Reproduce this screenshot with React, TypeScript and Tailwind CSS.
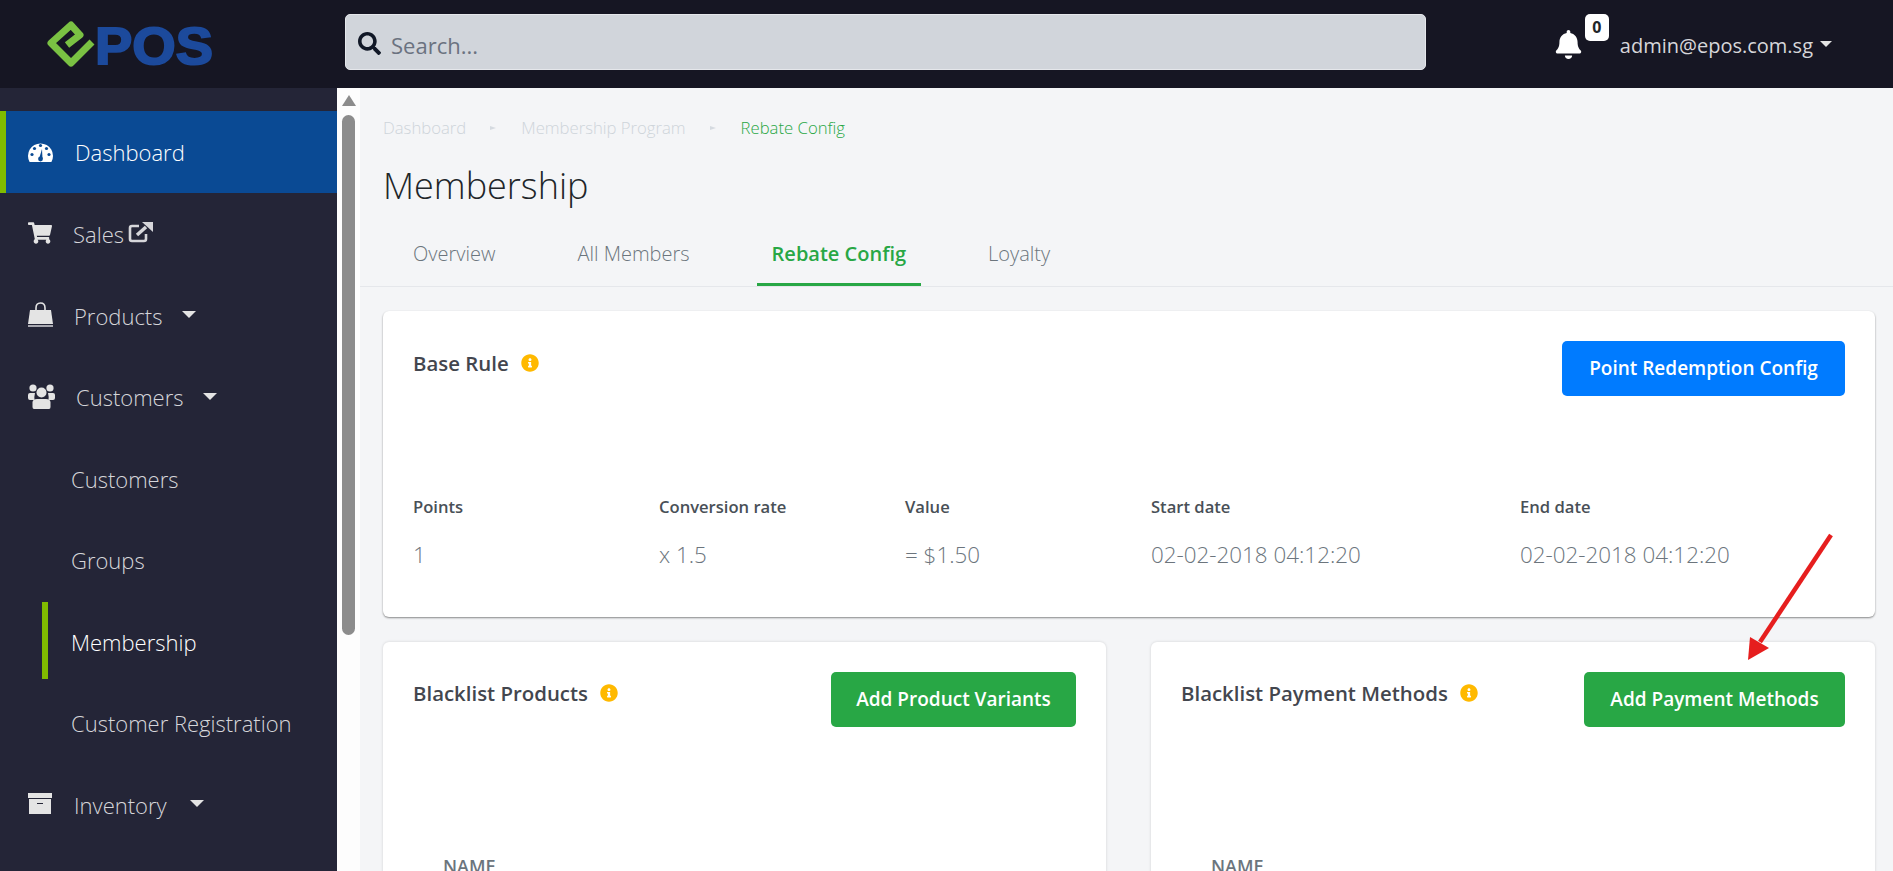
import React from "react";
import { FaShoppingCart, FaBell, FaSearch, FaInfoCircle } from "react-icons/fa";

const font = { fontFamily: '"Open Sans", "Noto Sans", sans-serif' };

function Logo() {
  return (
    <svg width="190" height="72" viewBox="44 8 190 72" className="block">
      <path d="M67 45 L80 35 L71 25 L51 43 L71 63 L92 42" fill="none" stroke="#7ac143" strokeWidth="7" strokeLinejoin="round" />
      <text x="95" y="64" textLength="118" lengthAdjust="spacingAndGlyphs" fontFamily="Liberation Sans" fontWeight="700" fontSize="52" fill="#1c4a9c" stroke="#1c4a9c" strokeWidth="2">POS</text>
    </svg>
  );
}

function Caret({ className }: { className?: string }) {
  return <span className={"inline-block w-0 h-0 border-l-[7px] border-r-[7px] border-t-[7px] border-l-transparent border-r-transparent border-t-[#e4e4e4] " + (className || "")} />;
}

function Ext() {
  return (
    <svg width="25" height="21" viewBox="0 0 25 21" fill="none" className="ml-[4px] -mt-[2px]">
      <path d="M11 4 H4 Q2 4 2 6 V17 Q2 19 4 19 H16 Q18 19 18 17 V12" stroke="#d6d6da" strokeWidth="2.6" />
      <path d="M9 13 L18 5" stroke="#d6d6da" strokeWidth="3.4" />
      <path d="M14 0 H25 V10 Z" fill="#d6d6da" />
    </svg>
  );
}

function Gauge() {
  return (
    <svg width="25" height="20" viewBox="0 0 25 20">
      <path d="M1.6 20 A12.5 12.5 0 1 1 23.4 20 Z" fill="#fff" />
      <circle cx="4" cy="12.5" r="1.6" fill="#0a4a94" />
      <circle cx="6.5" cy="6.5" r="1.6" fill="#0a4a94" />
      <circle cx="12.5" cy="3.5" r="1.6" fill="#0a4a94" />
      <circle cx="18.5" cy="6.5" r="1.6" fill="#0a4a94" />
      <circle cx="21" cy="12.5" r="1.6" fill="#0a4a94" />
      <path d="M11 17 L14 7 L14.5 17 Z" fill="#0a4a94" />
      <circle cx="12.5" cy="17" r="2.4" fill="#0a4a94" />
    </svg>
  );
}

function Bag() {
  return (
    <svg width="25" height="25" viewBox="0 0 25 25">
      <path d="M8 11 V6 Q8 1 12.5 1 Q17 1 17 6 V11" fill="none" stroke="#e4e4e4" strokeWidth="1.6" />
      <path d="M2 8 H23 L25 22 H0 Z" fill="#e4e4e4" />
      <path d="M0 23 H25 V25 H0 Z" fill="#a8a8b0" />
    </svg>
  );
}

function Users() {
  return (
    <svg width="27" height="25" viewBox="0 0 27 25" fill="#e4e4e4">
      <circle cx="5" cy="4" r="3.6" />
      <circle cx="22" cy="4" r="3.6" />
      <path d="M0 11 Q0 9 2 9 H7 Q6 13 6.5 16 H2 Q0 16 0 14 Z" />
      <path d="M27 11 Q27 9 25 9 H20 Q21 13 20.5 16 H25 Q27 16 27 14 Z" />
      <circle cx="13.5" cy="8.5" r="5" />
      <path d="M6 25 Q4.5 25 4.5 23 V18 Q5 15 9 15 H18 Q22 15 22.5 18 V23 Q22.5 25 21 25 Z" />
    </svg>
  );
}

function Box() {
  return (
    <svg width="24" height="22" viewBox="0 0 24 22">
      <path d="M0 0 H24 V5 H0 Z" fill="#e4e4e4" />
      <path d="M1 6 H23 V21 H1 Z" fill="#e4e4e4" />
      <path d="M9 10 H15 V11 H9 Z" fill="#242537" />
    </svg>
  );
}

function NavRow({ icon, label, caret, active, extra, ml, gap }: { icon: React.ReactNode; label: string; caret?: boolean; active?: boolean; extra?: React.ReactNode; ml: string; gap?: string }) {
  return (
    <div className={"h-[81.5px] flex items-center border-l-[6px] " + (active ? "bg-[#0a4a94] border-[#80bb00] text-white" : "border-transparent text-[#d6d6da]")}>
      <span className="w-[27px] ml-[22px] flex justify-start text-[#e4e4e4]">{icon}</span>
      <span className={"text-[22px] font-light " + (active ? "pt-[1px] " : "pt-[3px] ") + ml}>{label}</span>
      {extra}
      {caret && <Caret className={gap || "ml-[20px]"} />}
    </div>
  );
}

function SubRow({ label, active }: { label: string; active?: boolean }) {
  return (
    <div className="h-[81.5px] flex items-center pl-[42px]">
      <div className={"h-[77px] w-[6px] " + (active ? "bg-[#80bb00]" : "")} />
      <span className={"ml-[23px] text-[22px] font-light pt-[3px] " + (active ? "text-white" : "text-[#d6d6da]")}>{label}</span>
    </div>
  );
}

function Info() {
  return <FaInfoCircle className="text-[#ffb900] text-[18px] ml-[12px]" />;
}

function Tab({ label, active }: { label: string; active?: boolean }) {
  return (
    <div className={"h-[62px] px-[15px] flex items-center border-b-[3px] text-[20px] " + (active ? "border-[#28a745] text-[#28a745] font-semibold" : "border-transparent text-[#6c757d] font-light")}>{label}</div>
  );
}

function Col({ w, head, val }: { w: string; head: string; val: string }) {
  return (
    <div className={w}>
      <div className="text-[16.6px] font-semibold text-[#495057]">{head}</div>
      <div className="mt-[18px] text-[22.4px] font-light text-[#6c757d]">{val}</div>
    </div>
  );
}

function BlackCard({ w, title, btn, btnW }: { w: string; title: string; btn: string; btnW: string }) {
  return (
    <div className={"bg-white rounded-[6px] shadow-[0_0_3px_rgba(0,0,0,0.15)] h-[260px] px-[30px] pt-[30px] " + w}>
      <div className="flex justify-between items-start">
        <div className="flex items-center text-[20.4px] font-semibold text-[#43464e] mt-[6px]">{title}<Info /></div>
        <button className={"h-[55px] bg-[#28a745] rounded-[5px] text-white text-[19px] font-semibold flex items-center justify-center " + btnW}>{btn}</button>
      </div>
      <div className="mt-[126px] ml-[30px] text-[18px] font-semibold text-[#6c757d]">NAME</div>
    </div>
  );
}

function Sep() {
  return <span className="ml-[24px] mr-[25px] w-0 h-0 border-l-[6px] border-t-[2px] border-b-[2px] border-l-[#d5dae0] border-t-transparent border-b-transparent" />;
}

export default function App() {
  return (
    <div className="h-screen w-full overflow-hidden flex flex-col bg-[#f4f5f7] relative" style={font}>
      <header className="h-[88px] shrink-0 bg-[#161623] flex items-center">
        <div className="w-[345px] pl-[44px]"><Logo /></div>
        <div className="w-[1081px] h-[56px] mb-[4px] bg-[#d1d5db] rounded-[5px] flex items-center pl-[12px] border border-[#e5e7eb]">
          <FaSearch className="text-[#111827] text-[23px] mt-[3px]" />
          <span className="ml-[10px] text-[22px] text-[#6b7280] pt-[6px]">Search...</span>
        </div>
        <div className="ml-auto flex items-center pr-[61px]">
          <div className="relative mr-[37px]">
            <FaBell className="text-white text-[29px]" />
            <span className="absolute -top-[16px] left-[31px] w-[24px] h-[27px] bg-white rounded-[5px] flex items-center justify-center text-[16px] font-bold text-[#212529]">0</span>
          </div>
          <span className="text-[20px] text-[#d6d6da] pt-[4px]">admin@epos.com.sg</span>
          <Caret className="ml-[7px] !border-l-[6px] !border-r-[6px] !border-t-[6px]" />
        </div>
      </header>
      <div className="flex-1 flex min-h-0">
        <aside className="w-[337px] shrink-0 bg-[#242537] pt-[23px]">
          <NavRow active icon={<Gauge />} label="Dashboard" ml="ml-[20px]" />
          <NavRow icon={<FaShoppingCart size={24} />} label="Sales" ml="ml-[18px]" extra={<Ext />} />
          <NavRow icon={<Bag />} label="Products" caret ml="ml-[19px]" />
          <NavRow icon={<Users />} label="Customers" caret ml="ml-[21px]" />
          <SubRow label="Customers" />
          <SubRow label="Groups" />
          <SubRow label="Membership" active />
          <SubRow label="Customer Registration" />
          <NavRow icon={<Box />} label="Inventory" caret gap="ml-[23px]" ml="ml-[19px]" />
        </aside>
        <div className="w-[23px] shrink-0 bg-[#fdfdfd] flex flex-col items-center pt-[7px]">
          <span className="w-0 h-0 border-l-[7px] border-r-[7px] border-b-[11px] border-l-transparent border-r-transparent border-b-[#8c8c8c]" />
          <div className="mt-[9px] w-[13px] h-[520px] rounded-full bg-[#8c8c8c]" />
        </div>
        <main className="flex-1 min-w-0">
          <div className="px-[23px] pt-[27px] flex items-center text-[16.7px] font-light text-[#ced4da]">
            <span>Dashboard</span>
            <Sep />
            <span>Membership Program</span>
            <Sep />
            <span className="text-[#28a745]">Rebate Config</span>
          </div>
          <h1 className="px-[23px] mt-[22px] text-[36px] font-light text-[#212529] leading-[48px]">Membership</h1>
          <div className="mt-[14px] pl-[38px] h-[63px] border-b border-[#e5e7eb] flex gap-[52px]">
            <Tab label="Overview" />
            <Tab label="All Members" />
            <Tab label="Rebate Config" active />
            <Tab label="Loyalty" />
          </div>
          <div className="pl-[23px] pr-[18px] pt-[24px]">
            <div className="bg-white rounded-[6px] shadow-[0_1px_2px_rgba(0,0,0,0.45)] h-[306px] px-[30px] pt-[30px]">
              <div className="flex justify-between items-start">
                <div className="flex items-center text-[20.4px] font-semibold text-[#43464e] mt-[7px]">Base Rule<Info /></div>
                <button className="w-[283px] h-[55px] bg-[#007bff] rounded-[5px] text-white text-[19px] font-semibold">Point Redemption Config</button>
              </div>
              <div className="flex mt-[99px]">
                <Col w="w-[246px]" head="Points" val="1" />
                <Col w="w-[246px]" head="Conversion rate" val="x 1.5" />
                <Col w="w-[246px]" head="Value" val="= $1.50" />
                <Col w="w-[369px]" head="Start date" val="02-02-2018 04:12:20" />
                <Col w="w-[300px]" head="End date" val="02-02-2018 04:12:20" />
              </div>
            </div>
            <div className="flex gap-[45px] mt-[25px]">
              <BlackCard w="w-[723px]" title="Blacklist Products" btn="Add Product Variants" btnW="w-[245px]" />
              <BlackCard w="w-[724px]" title="Blacklist Payment Methods" btn="Add Payment Methods" btnW="w-[261px]" />
            </div>
          </div>
        </main>
      </div>
      <svg className="absolute left-[1740px] top-[530px]" width="100" height="140" viewBox="0 0 100 140">
        <path d="M91 5 L20 112" stroke="#e61e1e" strokeWidth="4.5" fill="none" />
        <path d="M8 130 L10 107 L29 118 Z" fill="#e61e1e" />
      </svg>
    </div>
  );
}
